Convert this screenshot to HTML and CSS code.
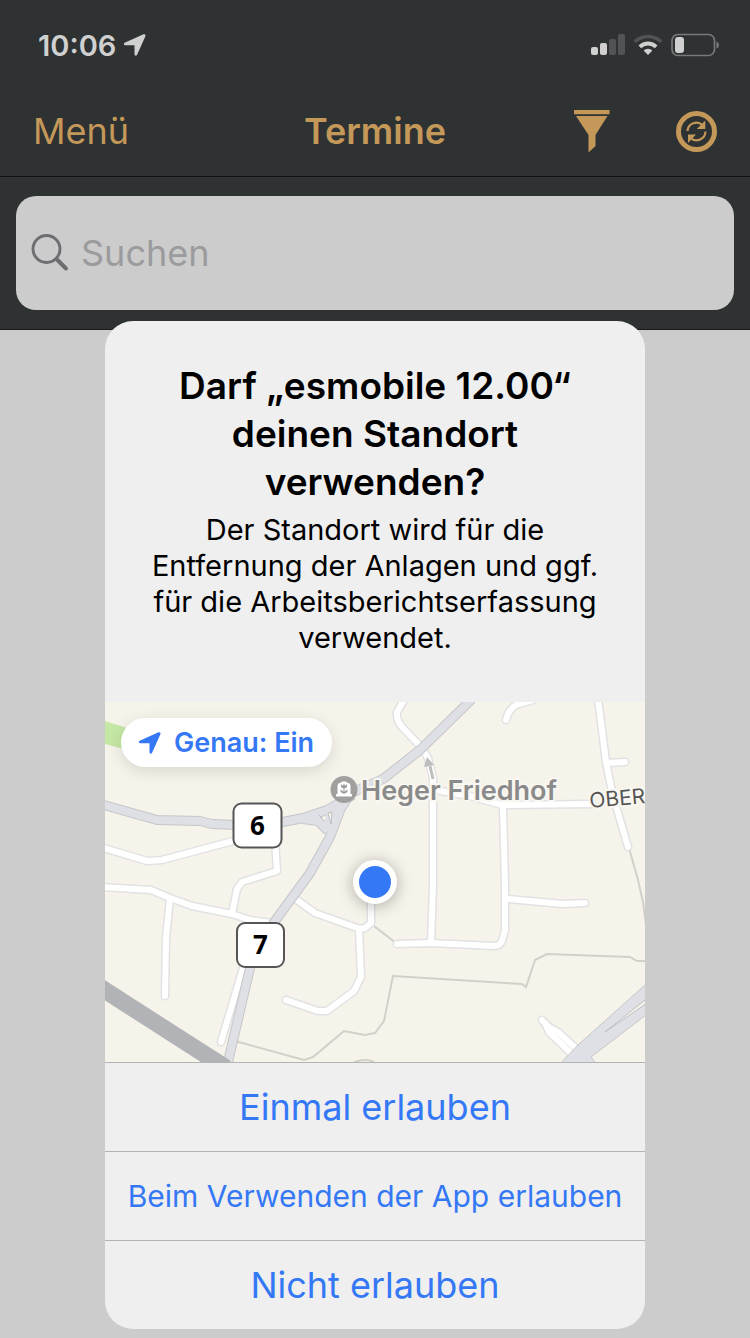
FILE: index.html
```html
<!DOCTYPE html>
<html lang="de">
<head>
<meta charset="utf-8">
<meta name="viewport" content="width=device-width, initial-scale=1">
<title>Termine</title>
<link rel="stylesheet" href="styles.css">
</head>
<body>
<div class="screen">
  <div class="app">
    <div class="status">
      <div class="status-left">
        <span>10:06</span>
        <svg width="24" height="24" viewBox="0 0 24 24" aria-hidden="true"><path d="M2.200 9.500 20.500 1.300c1.400-.6 2.500.5 1.900 1.900L14.200 21.500c-.8 1.900-2.700 1.500-2.700-.4V12.300H2.600c-2 0-2.300-2-.4-2.800z" fill="currentColor"/></svg>
      </div>
      <svg class="status-icons" width="130" height="24" viewBox="590 33 130 24" aria-hidden="true">
        <g fill="#d0d0d0"><rect x="591" y="47" width="7" height="8" rx="2"/><rect x="600" y="43" width="7" height="12" rx="2"/></g>
        <g fill="#515455"><rect x="609" y="39" width="7" height="16" rx="2"/><rect x="618" y="34" width="7" height="21" rx="2"/></g>
        <path d="M633.500 40.500l2.600 2.600a17 17 0 0 1 23.800 0l2.600-2.600a21 21 0 0 0-29 0z" fill="#515455"/>
        <path d="M638.500 45.500l2.700 2.700a9.700 9.700 0 0 1 13.600 0l2.700-2.700a13.500 13.500 0 0 0-19 0z" fill="#d0d0d0"/>
        <path d="M643.600 50.600a6.300 6.300 0 0 1 8.800 0L648 55z" fill="#d0d0d0"/>
        <rect x="672" y="34.500" width="42.500" height="21" rx="6" fill="none" stroke="#777a7b" stroke-width="1.700"/>
        <rect x="675" y="37" width="9" height="16" rx="3" fill="#d0d0d0"/>
        <path d="M716.500 41.500c3.300 1 3.300 6 0 7z" fill="#777a7b"/>
      </svg>
    </div>
    <header class="nav">
      <button class="nav-menu" type="button">Menü</button>
      <h1 class="nav-title">Termine</h1>
      <div class="nav-actions">
        <button class="icon-button" type="button" aria-label="Filter">
          <svg width="36" height="44" viewBox="574 109 36 44"><path d="M574 110h35.500v4.200H574zM576 116h31.500L595.500 135v11l-7 6.500V135z" fill="currentColor"/></svg>
        </button>
        <button class="icon-button" type="button" aria-label="Aktualisieren">
          <svg width="42" height="44" viewBox="675 109 42 44"><g fill="none" stroke="currentColor"><circle cx="696.500" cy="131.500" r="18" stroke-width="5"/><path d="M687.500 131a9 9 0 0 1 15-6M705.500 131.500a9 9 0 0 1-15 6.500" stroke-width="2.200"/></g><path d="M705.300 120.500v8.500h-8.500zM688 143v-8.500h8z" fill="currentColor"/></svg>
        </button>
      </div>
    </header>
    <div class="search-bar">
      <label class="search">
        <svg width="40" height="40" viewBox="30 233 40 40" aria-hidden="true"><g fill="none" stroke="#6d6d72" stroke-linecap="round"><circle cx="46.500" cy="249" r="13.500" stroke-width="2.900"/><path d="M57 259.500L66 268.500" stroke-width="4"/></g></svg>
        <input class="search-input" type="search" placeholder="Suchen" aria-label="Suchen">
      </label>
    </div>
  </div>

  <div class="overlay">
    <section class="dialog" role="alertdialog" aria-modal="true" aria-labelledby="dialog-title" aria-describedby="dialog-text">
      <div class="dialog-head">
        <h2 id="dialog-title" class="dialog-title">Darf „esmobile 12.00“ deinen Standort verwenden?</h2>
        <p id="dialog-text" class="dialog-text">Der Standort wird für die Entfernung der Anlagen und ggf. für die Arbeitsberichtserfassung verwendet.</p>
      </div>
      <div class="map">
        <svg class="map-canvas" viewBox="105 702 540 360" preserveAspectRatio="xMidYMid slice" role="img" aria-label="Karte">
          <defs>
            <g id="streets">
              <path d="M100 847L147 861L162 860L233 841L250 836"/>
              <path d="M275 840L277 871L242 882L237 889L232 914"/>
              <path d="M100 887L151 890L170 898L192 906L232 914L250 920L272 923"/>
              <path d="M170 898L166 938L165 996"/>
              <path d="M243 968L221 1042"/>
              <path d="M297 900L315 913L360 929L365 928L371 923V895"/>
              <path d="M359 929L361 977L354 991L327 1011H318L286 1000"/>
              <path d="M404 700L397 712Q396 720 402 727L422 748L428 758L433 778V885L431 943"/>
              <path d="M440 791L470 796L502 805L592 804"/>
              <path d="M503 807L505 885V930L502 941Q500 946 494 946L431 943L397 944"/>
              <path d="M508 899L563 904L585 903"/>
              <path d="M533 700L518 704Q509 708 506 720"/>
              <path d="M598 699L606 762L612 792L628 847"/>
              <path d="M607 763L625 762"/>
              <path d="M542 1020L549 1027L558 1032L580 1052"/>
              <path d="M545 1023L549 1032L575 1057"/>
            </g>
            <g id="main-roads">
              <path d="M100 804L157 820L200 821L212 824L235 825"/>
              <path d="M278 823L303 818L327 810L353 795"/>
              <path d="M303 819L318 821L328 831"/>
              <path d="M472 699L420 750L383 779L351 793L341 808L330 837L310 873L275 921L256 948L250 968L227 1066"/>
            </g>
          </defs>
          <rect class="land" x="105" y="702" width="540" height="360"/>
          <path class="park" d="M105 721L130 729L124 749L105 744z"/>
          <path class="trail" d="M235 1041L304 1060L313 1057L344 1031L365 1035L375 1033L384 1021L393 976L522 984L526 987L535 960L547 954L630 957L637 961L645 961M374 926L396 943M629 848L638 880L643 902L646 925M354 1062q12-4 20 0"/>
          <use href="#streets" class="street-edge"/>
          <use href="#streets" class="street"/>
          <use href="#main-roads" class="main-edge"/>
          <use href="#main-roads" class="main"/>
          <path d="M327 811L345 803L334 834L324 825z" fill="#dfe0e5"/>
          <path class="island" d="M328 813l4-1-1 12zM319 815l3 3"/>
          <path class="highway" d="M560 1064L578 1045L655 976V1008L591 1057L598 1066z"/>
          <path class="island" d="M650 996L605 1032L650 1001z"/>
          <path class="rail" d="M95 984L226 1068"/>
          <path d="M433 779L430 766" fill="none" stroke="#bdbdbd" stroke-width="3"/><path d="M427 757L434 765L424 767z" fill="#bdbdbd"/>
          <g class="shield"><rect x="233.500" y="803.500" width="48" height="44" rx="8"/><rect x="237" y="923" width="47" height="44" rx="8"/></g>
          <g class="shield-text"><text x="257.500" y="835">6</text><text x="260.500" y="954">7</text></g>
          <circle cx="344" cy="789.500" r="13.500" fill="#a09f9d"/>
          <path d="M336 796.500h16v-2.500h-1.500v-8c0-2-1-3-2.500-3q-4-3.500-8 0c-1.500 0-2.500 1-2.500 3v8H336z" fill="#fff"/>
          <path d="M341 784l1.500 1.500L344 784l1.500 1.500L347 784v3q-3 3-6 0zM343.500 788h1v6h-1zM340 790q3 0 4 3q1-3 4-3q-1 3.500-4 3.500T340 790" fill="#a09f9d"/>
          <text class="place" x="361" y="800">Heger Friedhof</text>
          <text class="street-name" x="590" y="808" transform="rotate(-5 590 808)">OBER</text>
        </svg>
        <button class="precise" type="button">
          <svg width="24" height="24" viewBox="0 0 24 24" aria-hidden="true"><path d="M2.200 9.500 20.500 1.300c1.400-.6 2.500.5 1.900 1.900L14.200 21.500c-.8 1.900-2.700 1.500-2.700-.4V12.300H2.600c-2 0-2.300-2-.4-2.800z" fill="currentColor"/></svg>
          <span>Genau: Ein</span>
        </button>
        <span class="position"></span>
      </div>
      <button class="choice" type="button">Einmal erlauben</button>
      <button class="choice choice-long" type="button">Beim Verwenden der App erlauben</button>
      <button class="choice" type="button">Nicht erlauben</button>
    </section>
  </div>
</div>
</body>
</html>
```

FILE: styles.css
```css
* {
  box-sizing: border-box;
}

body {
  margin: 0;
  background: #cccccc;
  font-family: Inter, "Liberation Sans", sans-serif;
}

button {
  border: 0;
  padding: 0;
  background: none;
  color: inherit;
  font: inherit;
}

.screen {
  position: relative;
  min-height: 100vh;
}

.app {
  background: #2e3233;
  color: #c49859;
  border-bottom: 1px solid #18191a;
}

.status {
  display: flex;
  justify-content: space-between;
  align-items: center;
  height: 88px;
  padding: 2px 30px 0 38px;
  color: #d0d0d0;
  font-size: 29px;
  font-weight: 600;
}

.status-left {
  display: flex;
  align-items: center;
  gap: 7px;
}

.nav {
  display: grid;
  grid-template-columns: 1fr auto 1fr;
  align-items: center;
  height: 89px;
  padding: 0 33px 2px;
  border-bottom: 1px solid #111213;
  font-size: 36px;
}

.nav-menu {
  justify-self: start;
}

.nav-title {
  margin: 0;
  font-size: 36px;
  font-weight: 600;
}

.nav-actions {
  display: flex;
  justify-self: end;
  gap: 65px;
}

.icon-button,
.icon-button svg,
.search svg,
.map-canvas,
.status-icons {
  display: block;
}

.search-bar {
  padding: 19px 16px;
}

.search {
  display: flex;
  align-items: center;
  gap: 11px;
  height: 114px;
  padding: 0 14px;
  border-radius: 20px;
  background: #cccccc;
}

.search-input {
  flex: 1;
  min-width: 0;
  padding: 0;
  border: 0;
  outline: 0;
  background: none;
  color: #333333;
  font: 36px Inter, "Liberation Sans", sans-serif;
}

.search-input::placeholder {
  color: #9b9b9d;
  opacity: 1;
}

.overlay {
  position: absolute;
  top: 0;
  left: 0;
  width: 100%;
  padding: 321px 0 9px;
}

.dialog {
  width: 72%;
  margin: 0 auto;
  overflow: hidden;
  border-radius: 28px;
  background: #efefef;
  color: #000000;
  text-align: center;
}

.dialog-head {
  padding: 41px 40px 46px;
}

.dialog-title {
  margin: 0 0 6px;
  font-size: 37px;
  font-weight: 600;
  line-height: 48px;
}

.dialog-text {
  margin: 0;
  font-size: 29px;
  line-height: 36px;
}

.map {
  position: relative;
}

.map-canvas {
  width: 100%;
  height: 360px;
}

.land { fill: #f6f3ea; }
.park { fill: #c5e7a4; }
.trail { fill: none; stroke: #d0d1c9; stroke-width: 2; }
.street, .street-edge { fill: none; stroke-linecap: round; stroke-linejoin: round; }
.street { stroke: #ffffff; stroke-width: 6; }
.street-edge { stroke: #e2e2e4; stroke-width: 9; }
.main, .main-edge { fill: none; stroke-linejoin: round; }
.main { stroke: #dfe0e5; stroke-width: 8; }
.main-edge { stroke: #c5c6c9; stroke-width: 10; }
.highway { fill: #dfe0e5; stroke: #c5c6c9; stroke-width: 1; }
.island { fill: #f6f3ea; stroke: #bdbec2; stroke-width: 1; }
.rail { stroke: #b2b3b7; stroke-width: 17; }

.shield rect {
  fill: #ffffff;
  stroke: #555555;
  stroke-width: 2;
}

.shield-text {
  fill: #000000;
  font: 700 26px "Noto Sans", sans-serif;
  text-anchor: middle;
}

.place,
.street-name {
  paint-order: stroke;
  stroke: #f9f7f1;
  stroke-width: 4;
  stroke-linejoin: round;
}

.place {
  fill: #8a8a8a;
  font-size: 27px;
  font-weight: 600;
}

.street-name {
  fill: #555555;
  font-size: 21px;
}

.precise {
  position: absolute;
  top: 16px;
  left: 16px;
  display: flex;
  align-items: center;
  gap: 12px;
  height: 49px;
  padding: 0 18px 0 17px;
  border-radius: 25px;
  background: #ffffff;
  box-shadow: 0 4px 16px rgba(0, 0, 0, 0.12);
  color: #3478f6;
  font-size: 27px;
  font-weight: 600;
}

.position {
  position: absolute;
  top: 50%;
  left: 50%;
  width: 44px;
  height: 44px;
  margin: -22px;
  border: 6px solid #ffffff;
  border-radius: 50%;
  background: #3478f6;
  box-shadow: 0 2px 16px rgba(0, 0, 0, 0.3);
}

.choice {
  display: block;
  width: 100%;
  height: 89px;
  border-top: 1px solid #b3b3b3;
  color: #3478f6;
  font-size: 36px;
}

.choice-long {
  font-size: 30px;
}
```
